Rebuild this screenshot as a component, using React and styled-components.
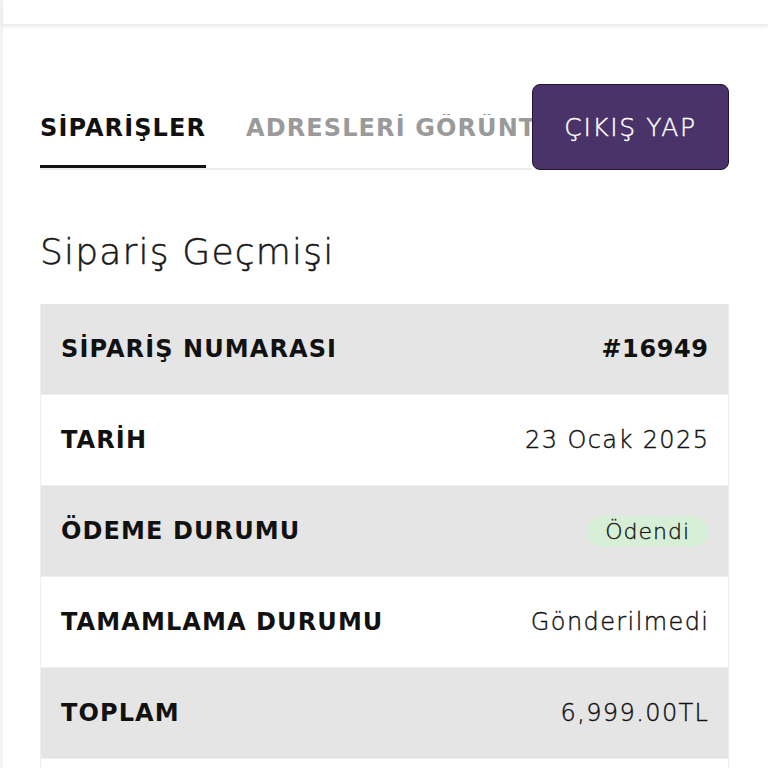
import styled, { createGlobalStyle } from "styled-components";

const GlobalStyle = createGlobalStyle`
  html, body {
    margin: 0;
    padding: 0;
    background: #fff;
    font-family: "DejaVu Sans", Inter, sans-serif;
    color: #111;
  }
`;

const rows = [
  { label: "SİPARİŞ NUMARASI", value: "#16949", strong: true },
  { label: "TARİH", value: "23 Ocak 2025" },
  { label: "ÖDEME DURUMU", value: "Ödendi", badge: true },
  { label: "TAMAMLAMA DURUMU", value: "Gönderilmedi" },
  { label: "TOPLAM", value: "6,999.00TL" },
  { label: "", value: "" },
];

const Page = styled.div`
  min-height: 768px;
  border-left: 3px solid #f3f3f3;
  box-sizing: border-box;
`;

const TopBar = styled.div`
  height: 24px;
  background: #fff;
  box-shadow: 0 2px 4px rgba(0, 0, 0, 0.08);
  border-bottom: 1px solid #ececec;
`;

const Content = styled.main`
  padding: 59px 39px 0 37px;
`;

const TabBar = styled.div`
  display: flex;
  align-items: flex-end;
  height: 86px;
`;

const Tabs = styled.nav`
  flex: 1;
  min-width: 0;
  display: flex;
  gap: 40px;
  overflow: hidden;
  border-bottom: 2px solid #ececec;
  height: 84px;
  align-items: flex-end;
`;

const Tab = styled.div`
  flex: ${(p) => (p.$active ? "0 0 auto" : "0 1 auto")};
  min-width: 0;
  overflow: hidden;
  font-size: 24px;
  font-weight: 700;
  letter-spacing: 1.1px;
  white-space: nowrap;
  color: ${(p) => (p.$active ? "#111" : "#9a9a9a")};
  padding-bottom: 23px;
  border-bottom: 5px solid ${(p) => (p.$active ? "#111" : "transparent")};
  margin-bottom: -2px;
`;

const LogoutButton = styled.button`
  flex: 0 0 197px;
  height: 86px;
  background: #4a3368;
  border: 1.5px solid #241433;
  border-radius: 8px;
  color: #fff;
  font-family: "DejaVu Sans", sans-serif;
  font-size: 25px;
  font-weight: 200;
  letter-spacing: 1.6px;
  -webkit-text-stroke: 0.4px #fff;
  cursor: pointer;
`;

const Heading = styled.h2`
  margin: 60px 0 0;
  font-size: 36px;
  font-weight: 200;
  letter-spacing: 1.2px;
  color: #1a1a1a;
  -webkit-text-stroke: 0.5px #1a1a1a;
  line-height: 44px;
`;

const Table = styled.div`
  margin-top: 30px;
  border-left: 1px solid #eeeeee;
  border-right: 1px solid #eeeeee;
`;

const Row = styled.div`
  display: flex;
  justify-content: space-between;
  align-items: center;
  height: 91px;
  padding: 0 20px;
  background: ${(p) => (p.$shade ? "#e5e5e5" : "#fff")};
  border-bottom: 1px solid #f0f0f0;
  box-sizing: border-box;
`;

const Label = styled.span`
  font-size: 24px;
  font-weight: 700;
  letter-spacing: 1.1px;
  color: #111;
`;

const Value = styled.span`
  font-size: 24px;
  font-weight: ${(p) => (p.$strong ? 700 : 200)};
  letter-spacing: ${(p) => (p.$strong ? "0.6px" : "1.4px")};
  margin-right: ${(p) => (p.$strong ? "-0.6px" : "-1.4px")};
  -webkit-text-stroke: ${(p) => (p.$strong ? "0" : "0.4px #111")};
  color: #111;
`;

const Badge = styled.span`
  font-size: 22px;
  font-weight: 200;
  letter-spacing: 1px;
  -webkit-text-stroke: 0.35px #111;
  color: #111;
  background: #d6efd6;
  border-radius: 16px;
  padding: 3px 18px;
`;

export default function App() {
  return (
    <Page>
      <GlobalStyle />
      <TopBar />
      <Content>
        <TabBar>
          <Tabs>
            <Tab $active>SİPARİŞLER</Tab>
            <Tab>ADRESLERİ GÖRÜNTÜLE</Tab>
          </Tabs>
          <LogoutButton>ÇIKIŞ YAP</LogoutButton>
        </TabBar>
        <Heading>Sipariş Geçmişi</Heading>
        <Table>
          {rows.map((r, i) => (
            <Row key={i} $shade={i % 2 === 0}>
              <Label>{r.label}</Label>
              {r.badge ? (
                <Badge>{r.value}</Badge>
              ) : (
                <Value $strong={r.strong}>{r.value}</Value>
              )}
            </Row>
          ))}
        </Table>
      </Content>
    </Page>
  );
}
